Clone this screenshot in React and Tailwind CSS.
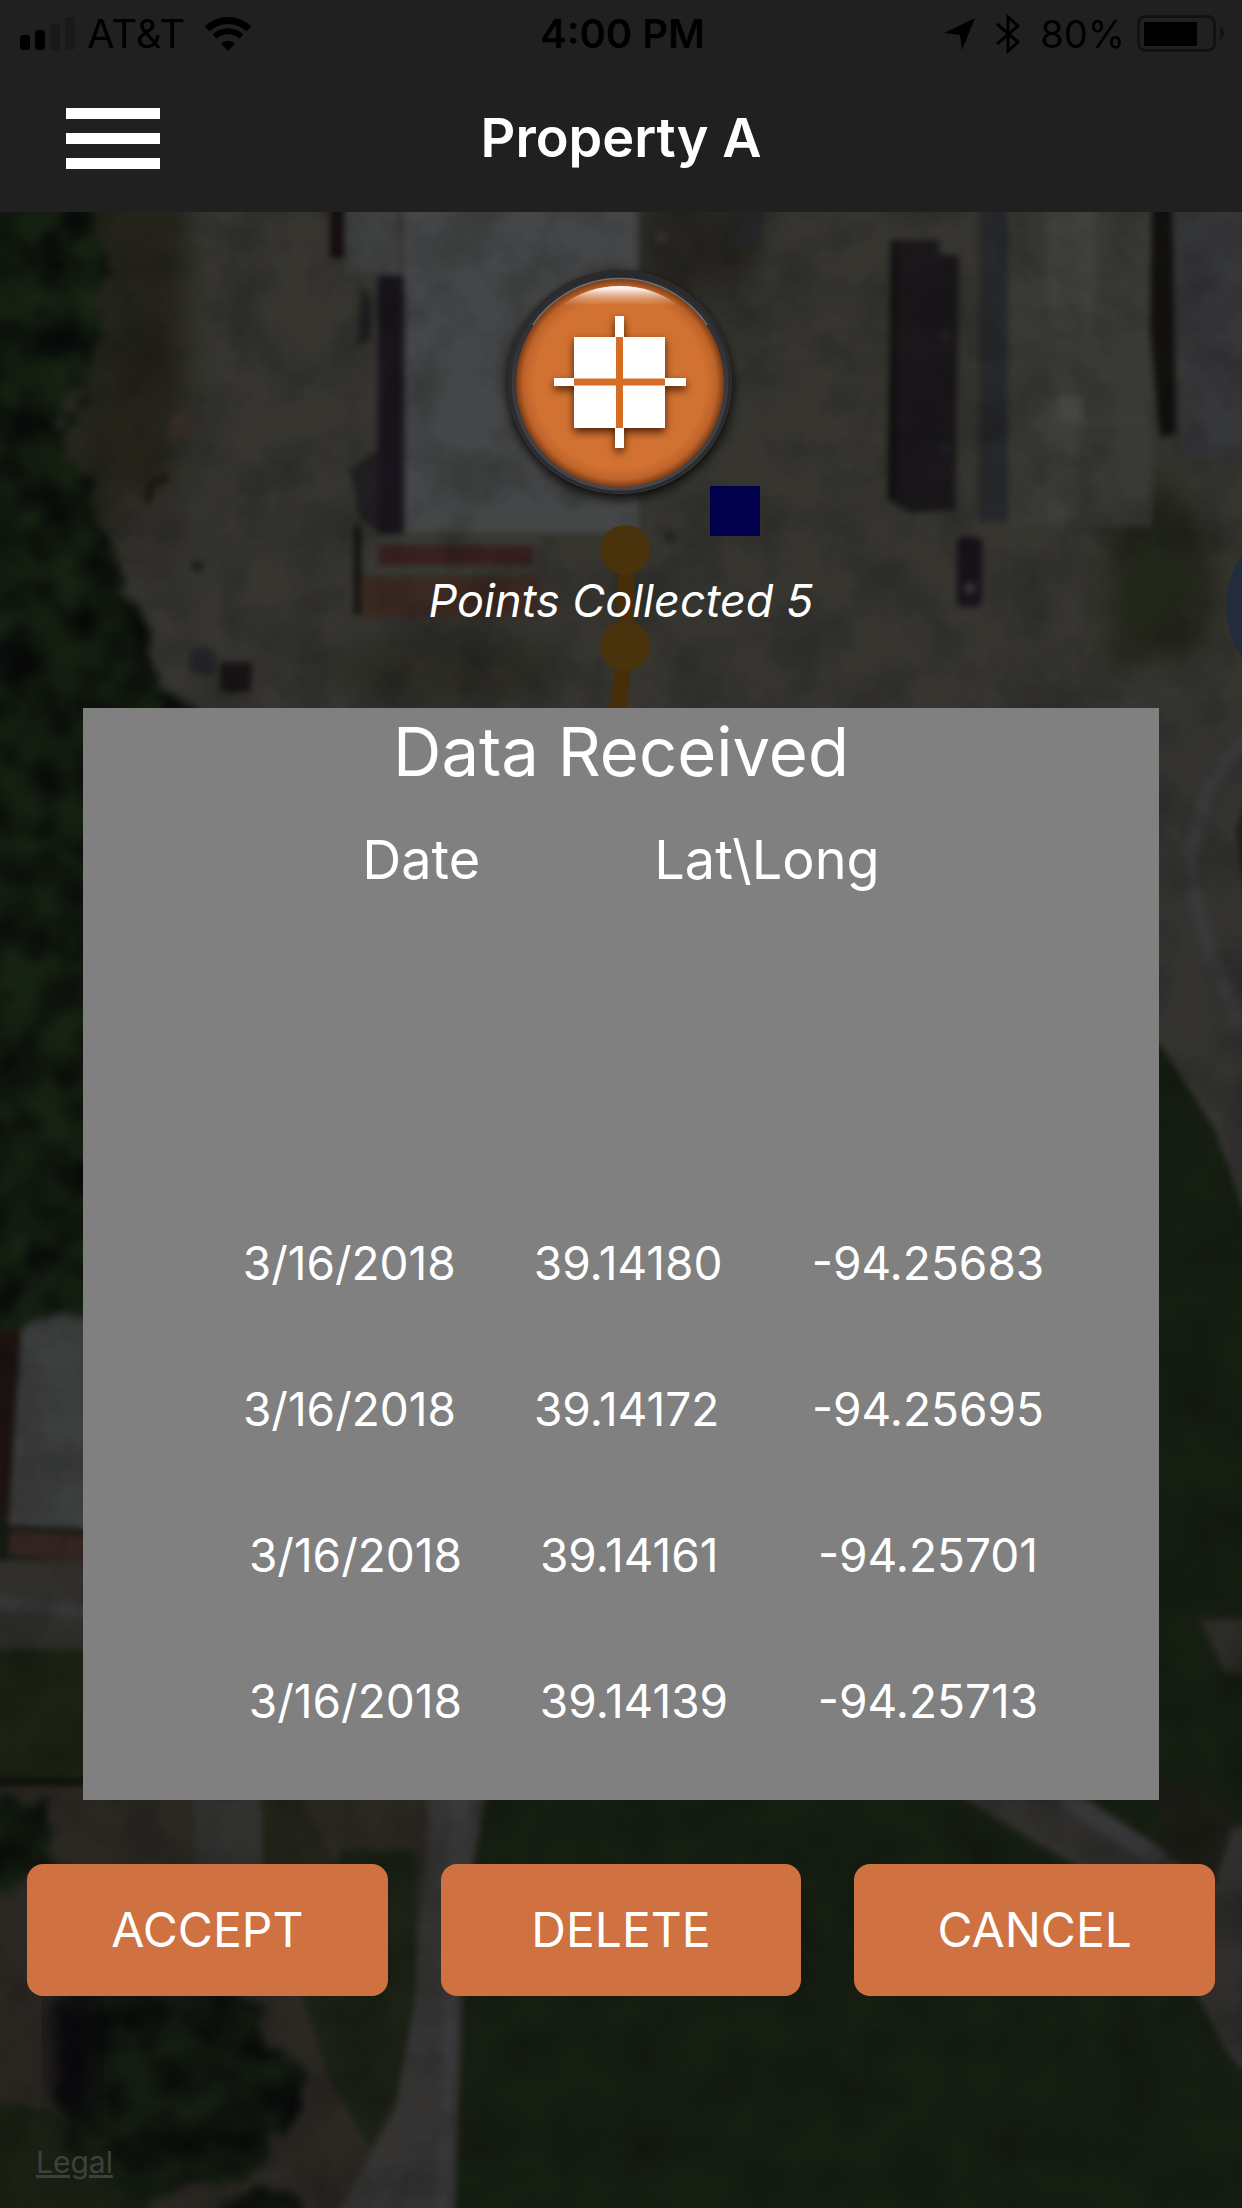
import React from "react";

const points = [
  { date: "3/16/2018", lat: "39.14180", long: "-94.25683" },
  { date: "3/16/2018", lat: "39.14172", long: "-94.25695" },
  { date: "3/16/2018", lat: "39.14161", long: "-94.25701" },
  { date: "3/16/2018", lat: "39.14139", long: "-94.25713" },
];

const actions = ["ACCEPT", "DELETE", "CANCEL"];

function SatelliteMap() {
  return (
    <svg
      className="absolute inset-0 h-full w-full"
      viewBox="0 0 1242 2208"
      preserveAspectRatio="xMidYMid slice"
      aria-hidden="true"
    >
      <defs>
        <filter id="soft" x="-5%" y="-5%" width="110%" height="110%" colorInterpolationFilters="sRGB">
          <feGaussianBlur stdDeviation="3" />
        </filter>
        <filter id="haze" x="-20%" y="-20%" width="140%" height="140%" colorInterpolationFilters="sRGB">
          <feGaussianBlur stdDeviation="14" />
        </filter>
        <filter id="foliage" x="-10%" y="-10%" width="120%" height="120%" colorInterpolationFilters="sRGB">
          <feTurbulence type="fractalNoise" baseFrequency="0.025" numOctaves="3" seed="4" result="n" />
          <feDisplacementMap in="SourceGraphic" in2="n" scale="60" xChannelSelector="R" yChannelSelector="G" result="d" />
          <feColorMatrix in="n" type="matrix" values="0 0 0 0 0.03  0 0 0 0 0.035  0 0 0 0 0.035  0 2.4 0 0 -0.9" result="dark" />
          <feComposite in="dark" in2="d" operator="in" result="spots" />
          <feMerge result="m">
            <feMergeNode in="d" />
            <feMergeNode in="spots" />
          </feMerge>
          <feGaussianBlur in="m" stdDeviation="4" />
        </filter>
        <filter id="grain" x="0" y="0" width="100%" height="100%" colorInterpolationFilters="sRGB">
          <feTurbulence type="fractalNoise" baseFrequency="0.018" numOctaves="4" seed="9" />
          <feColorMatrix type="matrix" values="0 0 0 0 0  0 0 0 0 0  0 0 0 0 0  0 1.4 0 0 -0.55" />
        </filter>
      </defs>

      <rect width="1242" height="2208" fill="#363530" />

      <g filter="url(#haze)">
        <path d="M80 190H185L190 400L160 520L120 560L60 500Z" fill="#24241b" />
        <path d="M638 200H760V270L700 300L640 280Z" fill="#272520" />
        <ellipse cx="450" cy="670" rx="120" ry="40" fill="#2c2b25" />
        <path d="M1110 530L1170 470L1215 560L1210 640L1110 670Z" fill="#23271b" />
        <ellipse cx="150" cy="540" rx="45" ry="50" fill="#32302b" />
      </g>

      <g filter="url(#soft)">
        {/* warehouse and loading yard */}
        <rect x="403" y="200" width="235" height="333" fill="#444647" />
        <rect x="345" y="200" width="54" height="74" fill="#3f4040" />
        <rect x="330" y="200" width="14" height="58" fill="#15100f" />
        <rect x="378" y="276" width="26" height="258" fill="#19151c" />
        <path d="M362 285Q375 300 370 340L358 345ZM350 470L378 450V530L360 520Z" fill="#201e20" />
        <rect x="362" y="537" width="178" height="36" fill="#393a36" />
        <rect x="378" y="545" width="155" height="20" fill="#37211e" />
        <rect x="362" y="577" width="178" height="40" fill="#3a2922" />
        <rect x="354" y="525" width="7" height="90" fill="#151312" />
        <path d="M172 415L190 410L192 435L168 440Z" fill="#352b25" />
        <path d="M148 502L150 485L168 476" stroke="#1d1610" strokeWidth="7" fill="none" />
        <rect x="190" y="648" width="26" height="26" rx="6" fill="#27252a" />
        <rect x="220" y="662" width="32" height="30" rx="4" fill="#171417" />
        <path d="M252 668L266 672L262 692L250 695Z" fill="#373330" />
        <circle cx="197" cy="566" r="6" fill="#1e1e1a" />
        <rect x="730" y="200" width="33" height="46" fill="#272829" />
        <circle cx="661" cy="238" r="6" fill="#33312d" />
        {/* trailers and sheds */}
        <path d="M891 240H939V254L959 256L955 510L911 513L888 500L893 400Z" fill="#1a171b" />
        <path d="M891 240L897 240L895 500L888 498Z" fill="#100e0f" />
        <circle cx="945" cy="336" r="6" fill="#222026" />
        <circle cx="946" cy="449" r="5" fill="#222026" />
        <rect x="979" y="200" width="29" height="322" fill="#26282b" />
        <rect x="1008" y="200" width="144" height="326" fill="#393a36" />
        <rect x="1048" y="200" width="46" height="130" fill="#41413c" />
        <rect x="1048" y="400" width="28" height="120" fill="#3d3d3a" />
        <rect x="1058" y="396" width="24" height="26" fill="#454542" />
        <path d="M1008 422H1145" stroke="#42423e" strokeWidth="2" />
        <path d="M1152 200H1172L1176 434L1160 438L1150 330Z" fill="#13110f" />
        <path d="M1175 200H1242V458H1180Z" fill="#363739" />
        <rect x="957" y="537" width="25" height="70" rx="6" fill="#171319" />
        <circle cx="970" cy="588" r="6" fill="#353336" />
        <circle cx="670" cy="537" r="7" fill="#272624" />

        {/* drive on the right */}
        <path d="M1150 700H1260V1240L1140 1100Z" fill="#343330" />
        <path d="M1250 735Q1192 795 1192 865Q1194 930 1250 1045" stroke="#39393b" strokeWidth="14" fill="none" />
        <path d="M1236 830L1250 790V930Z" fill="#1c2015" />

        {/* meadow */}
        <path d="M1100 1020L1160 1044L1215 1130L1250 1230L1270 2230H455L463 2000L490 1790L1100 1780Z" fill="#161e12" />
        <path d="M1200 1620L1260 1618V1675L1225 1672Z" fill="#2d2b27" />
        <path d="M1160 1785L1200 1790L1242 1830V1900L1165 1850Z" fill="#1d1d17" />
        <path d="M960 1796H1070L1215 1885L1232 1830L1260 1820V2090L1225 2050L1195 1990L1120 1890L1040 1845Z" fill="#302f2d" />
        <path d="M1065 1796L1160 1860" stroke="#3a383a" strokeWidth="20" />

        {/* small house and lane on the left */}
        <rect x="-10" y="1290" width="110" height="270" fill="#151a12" />
        <path d="M-10 1320L20 1315L8 1520L-10 1500Z" fill="#1e1411" />
        <path d="M22 1315L60 1300H100V1530L8 1525Z" fill="#3d3f3e" />
        <path d="M10 1530L90 1535V1562L8 1555Z" fill="#352522" />
        <rect x="-10" y="1560" width="110" height="90" fill="#302f2b" />
        <path d="M-10 1602L100 1612" stroke="#37373a" strokeWidth="14" />
        <rect x="-10" y="1650" width="110" height="128" fill="#1b2213" />
        <rect x="-10" y="1778" width="110" height="8" fill="#0e100b" />
        <rect x="-10" y="1786" width="500" height="440" fill="#2b2823" />
        <rect x="195" y="1796" width="66" height="74" fill="#323331" />
        <path d="M262 1796H300L340 1870H262Z" fill="#222319" />
        <path d="M340 1850H415V2000L400 2090L370 2150L330 2080L300 1990Z" fill="#1b2115" />
        <path d="M430 1790H487L470 1880L462 2000L455 2230H330L395 2110L415 2000Z" fill="#353433" />
        <path d="M450 1790H472L456 2000L448 2230H436L444 2000Z" fill="#3a393b" />
        <path d="M487 1790H640V2230H455L462 2000L470 1880Z" fill="#161e12" />
        <path d="M-10 2100L50 2110L150 2180V2230H-10Z" fill="#1a2013" />
      </g>

      <g filter="url(#foliage)">
        <path d="M-60 150H90L115 330L65 430L105 520L130 600L160 680L200 740L120 1310L-60 1330Z" fill="#162212" />
        <path d="M-60 1800H48L56 1880L-60 1890Z" fill="#162112" />
        <path d="M50 1980H235L290 2060L305 2110L260 2170L140 2200L70 2150Z" fill="#151e12" />
        <path d="M230 2190L310 2195L330 2240H210Z" fill="#131810" />
      </g>
      <path d="M50 2000L90 1998L95 2080L80 2130L55 2090Z" fill="#0b080e" filter="url(#haze)" />
      <rect width="1242" height="2208" filter="url(#grain)" opacity="0.3" />

      {/* collected track */}
      <path d="M626 550V646L611 760" stroke="#472e0b" strokeWidth="17" fill="none" />
      <circle cx="625" cy="550" r="25" fill="#49330c" />
      <circle cx="625" cy="646" r="25" fill="#49330c" />
      <rect x="710" y="486" width="50" height="50" fill="#00004c" />
      <circle cx="1315" cy="606" r="89" fill="#212c3c" />
    </svg>
  );
}

function SignalIcon() {
  return (
    <svg className="h-9 w-14 shrink-0" viewBox="0 0 56 36" aria-hidden="true">
      <rect x="0" y="19" width="10" height="15" rx="3" fill="#000" />
      <rect x="15" y="14" width="10" height="20" rx="3" fill="#000" />
      <rect x="30" y="8" width="10" height="26" rx="3" fill="#191919" />
      <rect x="45" y="1" width="10" height="33" rx="3" fill="#191919" />
    </svg>
  );
}

function WifiIcon() {
  return (
    <svg className="h-9 w-12 shrink-0" viewBox="0 0 48 36" fill="none" stroke="#000" aria-hidden="true">
      <path d="M3 13A30 30 0 0 1 45 13" strokeWidth="7" />
      <path d="M10.500 20.500A20 20 0 0 1 37.500 20.500" strokeWidth="6" />
      <path d="M24 35L17 27.500A10 10 0 0 1 31 27.500Z" fill="#000" stroke="none" />
    </svg>
  );
}

function StatusBar() {
  return (
    <div className="grid grid-cols-3 items-center pt-[14px] pr-[17px] pl-5 text-[40px] leading-10 text-black">
      <div className="flex items-center gap-[11px]">
        <SignalIcon />
        <span>AT&amp;T</span>
        <span className="pl-2">
          <WifiIcon />
        </span>
      </div>
      <span className="text-center font-semibold">4:00 PM</span>
      <div className="flex items-center justify-end">
        <svg className="h-9 w-8 shrink-0" viewBox="0 0 32 36" aria-hidden="true">
          <path d="M31 2L18 34L16 19L0 17Z" fill="#000" />
        </svg>
        <svg className="ml-5 h-10 w-6 shrink-0" viewBox="0 0 24 40" fill="none" stroke="#000" strokeWidth="3" aria-hidden="true">
          <path d="M1 10L22 28L12 37V3L22 12L1 30" />
        </svg>
        <span className="ml-5 text-[38px]">80%</span>
        <svg className="ml-3 h-10 w-[88px] shrink-0" viewBox="0 0 88 40" aria-hidden="true">
          <rect x="1.500" y="2.500" width="76" height="34" rx="7" fill="none" stroke="#121212" strokeWidth="3" />
          <rect x="7" y="8" width="53" height="24" fill="#000" />
          <path d="M83 13Q91 19 83 26Z" fill="#121212" />
        </svg>
      </div>
    </div>
  );
}

function TargetButton() {
  return (
    <button type="button" aria-label="Collect point" className="block h-60 w-60 rounded-full">
      <svg className="h-full w-full overflow-visible" viewBox="0 0 240 240" aria-hidden="true">
        <defs>
          <radialGradient id="face">
            <stop offset="0.820" stopColor="#d27232" />
            <stop offset="0.930" stopColor="#bd632a" />
            <stop offset="1" stopColor="#7c3c14" />
          </radialGradient>
          <linearGradient id="gloss" x1="0" y1="0" x2="0" y2="1">
            <stop offset="0" stopColor="#fff" />
            <stop offset="0.200" stopColor="#fbeee5" stopOpacity="0.950" />
            <stop offset="1" stopColor="#e0b090" stopOpacity="0" />
          </linearGradient>
          <linearGradient id="rim" x1="0" y1="0" x2="0" y2="1">
            <stop offset="0" stopColor="#29282b" />
            <stop offset="1" stopColor="#48474b" />
          </linearGradient>
          <filter id="drop" x="-20%" y="-20%" width="140%" height="140%" colorInterpolationFilters="sRGB">
            <feDropShadow dx="0" dy="4" stdDeviation="6" floodColor="#000" floodOpacity="0.900" />
          </filter>
          <filter id="mark" x="-20%" y="-20%" width="140%" height="140%" colorInterpolationFilters="sRGB">
            <feDropShadow dx="0" dy="4" stdDeviation="4" floodColor="#3a1700" floodOpacity="0.900" />
          </filter>
        </defs>
        <circle cx="119" cy="119" r="112" fill="url(#rim)" filter="url(#drop)" />
        <circle cx="119" cy="119" r="110" fill="none" stroke="#2b2a2d" strokeWidth="3" />
        <path d="M32 62A105 105 0 0 1 206 62" fill="none" stroke="#69727c" strokeWidth="2" />
        <circle cx="119" cy="120" r="104" fill="url(#face)" />
        <path d="M60 43Q86 23 119 23Q152 23 178 43Q119 38 60 43Z" fill="url(#gloss)" />
        <g fill="#fff" filter="url(#mark)">
          <rect x="73" y="74" width="91" height="91" />
          <rect x="114" y="53" width="9" height="132" />
          <rect x="53" y="115" width="132" height="8" />
        </g>
        <path d="M118.500 74V165M73 119H164" stroke="#d56d24" strokeWidth="7" />
      </svg>
    </button>
  );
}

export default function App() {
  return (
    <div className="relative flex min-h-screen flex-col overflow-hidden bg-[#34332f] font-['Inter',sans-serif] text-white">
      <SatelliteMap />

      <header className="relative h-[212px] bg-[#202020]">
        <StatusBar />
        <div className="mt-12 grid grid-cols-[1fr_auto_1fr] items-center px-[66px]">
          <button type="button" aria-label="Menu" className="flex w-[94px] flex-col gap-[14px]">
            <span className="h-[11px] bg-white" />
            <span className="h-[11px] bg-white" />
            <span className="h-[11px] bg-white" />
          </button>
          <h1 className="text-[54px] leading-[72px] font-semibold">Property A</h1>
        </div>
      </header>

      <main className="relative flex flex-1 flex-col">
        <div className="flex flex-col items-center pt-[51px]">
          <TargetButton />
          <p className="mt-[68px] text-[45px] leading-[60px] italic">Points Collected 5</p>
        </div>

        <section className="mx-[83px] mt-[77px] h-[1092px] bg-[#808080]">
          <h2 className="pt-2 text-center text-[67px] leading-[72px]">Data Received</h2>
          <table className="mt-10 block">
            <thead className="block">
              <tr className="flex justify-center text-[54px] leading-[64px]">
                <th className="w-[292px] text-left font-normal">Date</th>
                <th className="text-left font-normal">Lat\Long</th>
              </tr>
            </thead>
            <tbody className="block pt-[298px] pl-[45px]">
              {points.map((p) => (
                <tr key={p.long} className="flex h-[146px] justify-center text-[46px] leading-[146px]">
                  <td className="w-[291px]">{p.date}</td>
                  <td className="w-[278px]">{p.lat}</td>
                  <td>{p.long}</td>
                </tr>
              ))}
            </tbody>
          </table>
        </section>

        <div className="mt-16 flex gap-[53px] px-[27px]">
          {actions.map((label) => (
            <button
              key={label}
              type="button"
              className="h-[132px] flex-1 rounded-2xl bg-[#cf7140] text-[48px] leading-[60px]"
            >
              {label}
            </button>
          ))}
        </div>

        <footer className="mt-auto px-9 pb-[26px]">
          <a href="#legal" className="text-[30px] leading-10 text-[#3d403c] underline">
            Legal
          </a>
        </footer>
      </main>
    </div>
  );
}
